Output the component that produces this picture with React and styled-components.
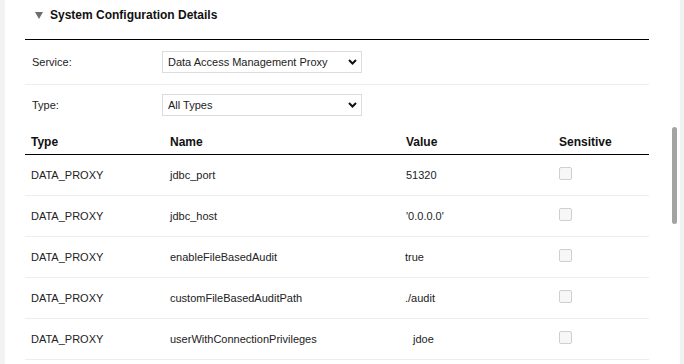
import React from 'react';
import styled, { createGlobalStyle } from 'styled-components';

const GlobalStyle = createGlobalStyle`
  html, body {
    margin: 0;
    padding: 0;
  }
  body {
    background: #f2f2f2;
    font-family: "Liberation Sans", Arial, sans-serif;
    color: #222;
  }
  * { box-sizing: border-box; }
`;

const Page = styled.div`
  position: relative;
  height: 364px;
  margin: 0 4px 0 5px;
  padding: 0 31px 0 20px;
  background: #fff;
  overflow: hidden;
`;

const SectionHeader = styled.div`
  display: flex;
  align-items: flex-start;
  gap: 7px;
  height: 40px;
  padding: 8px 0 0 10px;
  border-bottom: 1px solid #000;
`;

const Caret = styled.svg`
  margin-top: 4px;
  flex: none;
`;

const SectionTitle = styled.div`
  font-size: 12px;
  line-height: 14px;
  font-weight: 700;
  color: #111;
`;

const FieldRow = styled.div`
  display: flex;
  align-items: center;
  height: ${p => p.$height}px;
  padding-left: 7px;
  border-bottom: 1px solid ${p => (p.$divider ? '#ededed' : 'transparent')};
`;

const FieldLabel = styled.label`
  width: 130px;
  font-size: 11px;
  line-height: 13px;
`;

const SelectWrap = styled.div`
  position: relative;
  width: 200px;
  height: 22px;
`;

const Select = styled.select`
  appearance: none;
  -webkit-appearance: none;
  width: 100%;
  height: 100%;
  margin: 0;
  padding: 0 20px 0 5px;
  border: 1px solid #dcdcdc;
  border-radius: 0;
  background: #fff;
  font-family: "Liberation Sans", Arial, sans-serif;
  font-size: 11px;
  color: #222;
  outline: none;
`;

const Chevron = styled.svg`
  position: absolute;
  right: 5px;
  top: 8px;
  pointer-events: none;
`;

const columns = '139px 236px 153px 96px';

const HeadRow = styled.div`
  display: grid;
  grid-template-columns: ${columns};
  align-items: end;
  height: 29px;
  padding-bottom: 5px;
  border-bottom: 1px solid #000;
`;

const HeadCell = styled.div`
  padding-left: 6px;
  font-size: 12px;
  line-height: 14px;
  font-weight: 700;
  color: #111;
`;

const Row = styled.div`
  display: grid;
  grid-template-columns: ${columns};
  align-items: center;
  height: 41px;
  border-bottom: 1px solid #ededed;
`;

const Cell = styled.div`
  padding-left: ${p => p.$indent || 6}px;
  font-size: 11px;
  line-height: 13px;
  white-space: pre;
`;

const Check = styled.input`
  appearance: none;
  -webkit-appearance: none;
  display: block;
  width: 13px;
  height: 13px;
  margin: 0 0 3px 6px;
  border: 1px solid #cfcfcf;
  border-radius: 2px;
  background: #f7f7f7;
`;

const ScrollThumb = styled.div`
  position: absolute;
  right: 3px;
  top: 127px;
  width: 5px;
  height: 97px;
  border-radius: 3px;
  background: #a3a3a3;
`;

const props = [
  { name: 'jdbc_port', value: '51320' },
  { name: 'jdbc_host', value: "'0.0.0.0'" },
  { name: 'enableFileBasedAudit', value: 'true', indent: 5 },
  { name: 'customFileBasedAuditPath', value: './audit', indent: 5 },
  { name: 'userWithConnectionPrivileges', value: 'jdoe', indent: 13 },
];

function Dropdown({ value, options }) {
  return (
    <SelectWrap>
      <Select defaultValue={value}>
        {options.map(o => (
          <option key={o}>{o}</option>
        ))}
      </Select>
      <Chevron width="9" height="6" viewBox="0 0 9 6">
        <path d="M1 1 L4.5 4.5 L8 1" fill="none" stroke="#111" strokeWidth="2" />
      </Chevron>
    </SelectWrap>
  );
}

export default function App() {
  return (
    <>
      <GlobalStyle />
      <Page>
        <SectionHeader>
          <Caret width="8" height="7" viewBox="0 0 8 7">
            <polygon points="0,0 8,0 4,7" fill="#6e6e6e" />
          </Caret>
          <SectionTitle>System Configuration Details</SectionTitle>
        </SectionHeader>

        <FieldRow $height={45} $divider>
          <FieldLabel>Service:</FieldLabel>
          <Dropdown value="Data Access Management Proxy" options={['Data Access Management Proxy']} />
        </FieldRow>
        <FieldRow $height={41}>
          <FieldLabel>Type:</FieldLabel>
          <Dropdown value="All Types" options={['All Types', 'DATA_PROXY']} />
        </FieldRow>

        <HeadRow>
          <HeadCell>Type</HeadCell>
          <HeadCell>Name</HeadCell>
          <HeadCell>Value</HeadCell>
          <HeadCell>Sensitive</HeadCell>
        </HeadRow>
        {props.map(p => (
          <Row key={p.name}>
            <Cell>DATA_PROXY</Cell>
            <Cell>{p.name}</Cell>
            <Cell $indent={p.indent}>{p.value}</Cell>
            <div>
              <Check type="checkbox" disabled />
            </div>
          </Row>
        ))}
        <ScrollThumb />
      </Page>
    </>
  );
}
